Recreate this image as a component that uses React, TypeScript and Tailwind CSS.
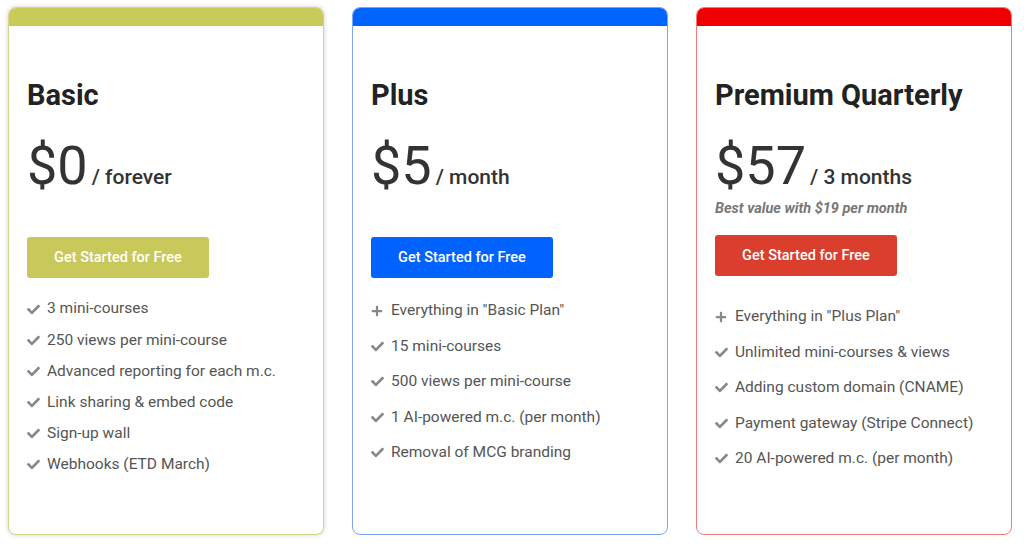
import React from "react";
import { FaCheck, FaPlus } from "react-icons/fa";

type Feature = { icon: "check" | "plus"; text: string };

function Card(props: {
  bar: string;
  border: string;
  btn: string;
  shadow: string;
  title: string;
  price: string;
  period: string;
  note?: string;
  features: Feature[];
  btnMargin: string;
  listMargin: string;
  itemGap: string;
}) {
  return (
    <div className={`flex w-[316px] h-[528px] flex-col overflow-hidden rounded-[8px] border bg-white ${props.border} ${props.shadow}`}>
      <div className={`h-[18px] shrink-0 ${props.bar}`} />
      <div className="flex flex-col px-[18px] pt-[52px]">
        <h2 className="text-[29px] font-bold leading-[34px] text-[#222]">{props.title}</h2>
        <div className="mt-[26px] flex items-baseline">
          <span className="text-[54px] leading-[56px] text-[#333]">{props.price}</span>
          <span className="ml-[4px] text-[21px] font-medium text-[#333]">{props.period}</span>
        </div>
        {props.note && (
          <div className="mt-[5px] text-[14.5px] font-bold italic leading-[19px] text-[#777]">{props.note}</div>
        )}
        <button className={`${props.btnMargin} h-[41px] w-[182px] rounded-[3px] text-[14.5px] font-medium text-white ${props.btn}`}>
          Get Started for Free
        </button>
        <ul className={`${props.listMargin} flex flex-col ${props.itemGap}`}>
          {props.features.map((f, i) => (
            <li key={i} className="flex h-[20px] items-center text-[15.5px] text-[#555]">
              <span className="flex w-[20px] shrink-0 items-center text-[#888]">
                {f.icon === "check" ? <FaCheck size={13} /> : <FaPlus size={12} />}
              </span>
              <span>{f.text}</span>
            </li>
          ))}
        </ul>
      </div>
    </div>
  );
}

export default function App() {
  return (
    <div
      className="flex h-[545px] w-[1024px] gap-[28px] bg-white pl-[8px] pt-[7px]"
      style={{ fontFamily: "Roboto, 'Noto Sans', sans-serif" }}
    >
      <Card
        bar="bg-[#c8ca5a]"
        border="border-[#d2d58e]"
        btn="bg-[#c8c95a]"
        shadow="shadow-[0_0_5px_rgba(0,0,0,0.18)]"
        title="Basic"
        price="$0"
        period="/ forever"
        btnMargin="mt-[43px]"
        listMargin="mt-[21px]"
        itemGap="gap-[11.2px]"
        features={[
          { icon: "check", text: "3 mini-courses" },
          { icon: "check", text: "250 views per mini-course" },
          { icon: "check", text: "Advanced reporting for each m.c." },
          { icon: "check", text: "Link sharing & embed code" },
          { icon: "check", text: "Sign-up wall" },
          { icon: "check", text: "Webhooks (ETD March)" },
        ]}
      />
      <Card
        bar="bg-[#0064ff]"
        border="border-[#7aa6f5]"
        btn="bg-[#0062ff]"
        shadow=""
        title="Plus"
        price="$5"
        period="/ month"
        btnMargin="mt-[43px]"
        listMargin="mt-[23px]"
        itemGap="gap-[15.4px]"
        features={[
          { icon: "plus", text: 'Everything in "Basic Plan"' },
          { icon: "check", text: "15 mini-courses" },
          { icon: "check", text: "500 views per mini-course" },
          { icon: "check", text: "1 AI-powered m.c. (per month)" },
          { icon: "check", text: "Removal of MCG branding" },
        ]}
      />
      <Card
        bar="bg-[#ee0000]"
        border="border-[#f27a7a]"
        btn="bg-[#db3e2d]"
        shadow=""
        title="Premium Quarterly"
        price="$57"
        period="/ 3 months"
        note="Best value with $19 per month"
        btnMargin="mt-[17px]"
        listMargin="mt-[31px]"
        itemGap="gap-[15.4px]"
        features={[
          { icon: "plus", text: 'Everything in "Plus Plan"' },
          { icon: "check", text: "Unlimited mini-courses & views" },
          { icon: "check", text: "Adding custom domain (CNAME)" },
          { icon: "check", text: "Payment gateway (Stripe Connect)" },
          { icon: "check", text: "20 AI-powered m.c. (per month)" },
        ]}
      />
    </div>
  );
}
